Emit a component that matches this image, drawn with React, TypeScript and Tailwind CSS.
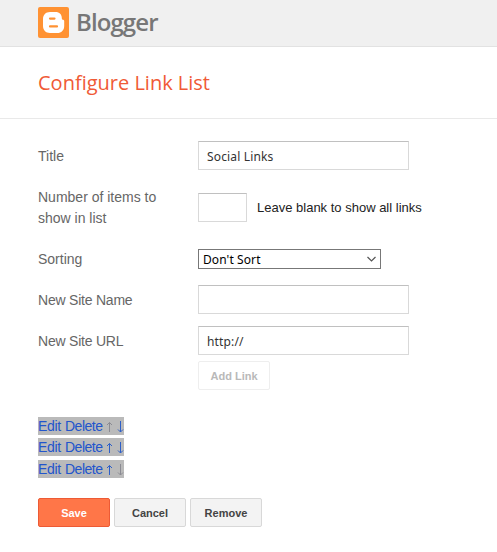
import type { ReactNode } from "react";

const fieldBox =
  "h-[29px] border border-[#d9d9d9] border-t-[#c0c0c0] bg-white pt-px font-['Noto_Sans',sans-serif] text-[12px] tracking-[0.15px] text-[#333] outline-none";

function Row({ label, tight = false, className, children }: { label: ReactNode; tight?: boolean; className: string; children: ReactNode }) {
  return (
    <div className={`flex items-center ${className}`}>
      <div className={`w-[160px] shrink-0 pt-px text-[14px] leading-[21px] text-[#666] ${tight ? "tracking-[-0.22px]" : ""}`}>{label}</div>
      {children}
    </div>
  );
}

function Arrow({ down = false, muted = false }: { down?: boolean; muted?: boolean }) {
  return (
    <svg width="7" height="12" viewBox="0 0 7 12" fill="none" stroke={muted ? "#8b8b93" : "#2d5fc8"} strokeWidth="1" className="mt-[2px] shrink-0">
      {down ? <path d="M3.5 0v11M1 8.5l2.5 2.5L6 8.5" /> : <path d="M3.5 11V1.5M1 4l2.5-2.5L6 4" />}
    </svg>
  );
}

function LinkItem({ upMuted, downMuted, className = "" }: { upMuted?: boolean; downMuted?: boolean; className?: string }) {
  return (
    <div className={`flex h-[18px] w-[86px] items-center bg-[#bababa] text-[14px] leading-[18px] text-[#2255cc] ${className}`}>
      <a className="w-[27px] tracking-[-0.3px]">Edit</a>
      <a className="w-[41px] tracking-[-0.5px]">Delete</a>
      <Arrow muted={upMuted} />
      <span className="w-1" />
      <Arrow down muted={downMuted} />
    </div>
  );
}

const button =
  "h-[29px] w-[72px] rounded-[2px] border text-center font-['Liberation_Sans',Arial,sans-serif] text-[11px] font-bold leading-[27px]";

export default function App() {
  return (
    <div className="h-[552px] w-[497px] overflow-hidden bg-white font-['Liberation_Sans',Arial,sans-serif]">
      <header className="flex h-[47px] items-start border-b border-[#e2e2e2] bg-[#f0f0f0] pl-[38px] pt-[7px]">
        <svg width="31" height="31" viewBox="0 0 31 31">
          <rect width="31" height="31" rx="2" fill="#ff9233" />
          <path
            fill="white"
            d="M12 5h5.5c4 0 6.3 2.6 6.3 6 0 1.3.4 1.7 1.4 1.8.7.1 1 .5 1 1.2v5c0 4.3-2.8 7-7 7H12c-4.2 0-7-2.8-7-7v-7c0-4.2 2.8-7 7-7Z"
          />
          <path d="M12 11.6h4.5M12 19.4h7" stroke="#ff9233" strokeWidth="2.2" strokeLinecap="round" />
        </svg>
        <span className="ml-[7px] font-['Open_Sans',sans-serif] text-[24px] font-semibold leading-[30px] tracking-[-0.9px] text-[#777]">Blogger</span>
      </header>
      <div className="h-[72px] border-b border-[#e9e9e9] pl-[38px] pt-[20px]">
        <h1 className="font-['Open_Sans',sans-serif] text-[20px] leading-[32px] text-[#f05a36]">Configure Link List</h1>
      </div>
      <main className="pl-[38px] pt-[22px]">
        <Row label="Title" className="h-[29px]">
          <input className={`${fieldBox} w-[211px] px-2`} defaultValue="Social Links" />
        </Row>
        <Row label={<>Number of items to<br />show in list</>} className="mt-[17px] h-[41px]">
          <input className={`${fieldBox} w-[49px] px-2`} />
          <span className="ml-[10px] text-[13px] text-[#222]">Leave blank to show all links</span>
        </Row>
        <Row label="Sorting" className="mt-[21px] h-[20px]">
          <div className="flex h-[20px] w-[183px] items-center justify-between border border-[#777] bg-white pl-1 pr-[3px] font-['Noto_Sans',sans-serif] text-[12px] tracking-[0.1px] text-black">
            <span className="pt-px">Don't Sort</span>
            <svg width="11" height="7" viewBox="0 0 11 7" fill="none" stroke="#555" strokeWidth="1.2">
              <path d="m1.5 1 4 4 4-4" />
            </svg>
          </div>
        </Row>
        <Row label="New Site Name" tight className="mt-[16px] h-[29px]">
          <input className={`${fieldBox} w-[211px] px-2`} />
        </Row>
        <Row label="New Site URL" tight className="mt-[12px] h-[29px]">
          <input className={`${fieldBox} w-[211px] px-2`} defaultValue="http://" />
        </Row>
        <button className={`${button} ml-[160px] mt-[6px] block border-[#eee] bg-white pt-px text-[#b9b9b9]`}>Add Link</button>
        <div className="mt-[27px]">
          <LinkItem upMuted />
          <LinkItem className="mt-[3px]" />
          <LinkItem className="mt-[4px]" downMuted />
        </div>
        <div className="mt-[20px] flex gap-1">
          <button className={`${button} border-[#ed5a35] bg-[#ff7648] pt-px text-white`}>Save</button>
          <button className={`${button} border-[#d8d8d8] bg-[#f3f3f3] pt-px text-[#444]`}>Cancel</button>
          <button className={`${button} border-[#d8d8d8] bg-[#f3f3f3] pt-px text-[#444]`}>Remove</button>
        </div>
      </main>
    </div>
  );
}
